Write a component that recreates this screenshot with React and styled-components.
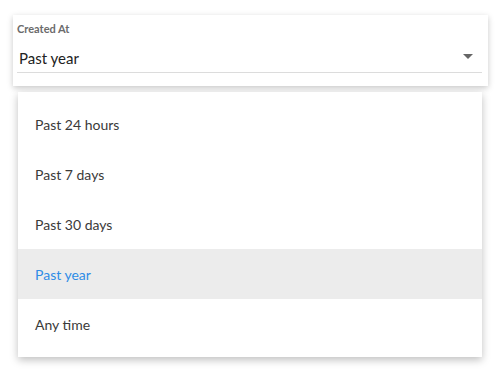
import React, { useState } from 'react';
import styled, { createGlobalStyle } from 'styled-components';

const GlobalStyle = createGlobalStyle`
  html, body {
    margin: 0;
    padding: 0;
    background: #ffffff;
    font-family: Lato, "Open Sans", sans-serif;
  }
`;

const Page = styled.div`
  width: 500px;
  height: 380px;
  box-sizing: border-box;
  padding: 15px 12px 0 13px;
  display: flex;
  flex-direction: column;
`;

const FieldCard = styled.div`
  width: 475px;
  height: 71px;
  box-sizing: border-box;
  padding: 8px 6px 0 4px;
  background: #fff;
  box-shadow: 0 2px 6px rgba(0, 0, 0, 0.22);
`;

const Label = styled.div`
  font-size: 11px;
  font-weight: 700;
  color: #6b6b6b;
  line-height: 12px;
`;

const SelectRow = styled.div`
  display: flex;
  align-items: center;
  justify-content: space-between;
  height: 28px;
  margin-top: 9px;
  border-bottom: 1px solid #dcdcdc;
  padding: 0 9px 0 2px;
`;

const Value = styled.span`
  font-size: 15px;
  color: #222;
`;

const Arrow = styled.span`
  width: 0;
  height: 0;
  border-left: 5px solid transparent;
  border-right: 5px solid transparent;
  border-top: 5px solid #666;
  margin-top: -3px;
`;

const Menu = styled.ul`
  list-style: none;
  margin: 6px 0 0 5px;
  padding: 7px 0 8px;
  width: 464px;
  background: #fff;
  box-shadow: 0 3px 8px rgba(0, 0, 0, 0.25);
`;

const Option = styled.li`
  height: 50px;
  display: flex;
  align-items: center;
  padding-left: 17px;
  font-size: 14px;
  color: ${(p) => (p.selected ? '#2f8ce6' : '#3a3a3a')};
  background: ${(p) => (p.selected ? '#ececec' : 'transparent')};
  cursor: pointer;
`;

const options = ['Past 24 hours', 'Past 7 days', 'Past 30 days', 'Past year', 'Any time'];

const App = () => {
  const [selected, setSelected] = useState('Past year');

  return (
    <>
      <GlobalStyle />
      <Page>
        <FieldCard>
          <Label>Created At</Label>
          <SelectRow>
            <Value>{selected}</Value>
            <Arrow />
          </SelectRow>
        </FieldCard>
        <Menu>
          {options.map((o) => (
            <Option key={o} selected={o === selected} onClick={() => setSelected(o)}>
              {o}
            </Option>
          ))}
        </Menu>
      </Page>
    </>
  );
};

export default App;
